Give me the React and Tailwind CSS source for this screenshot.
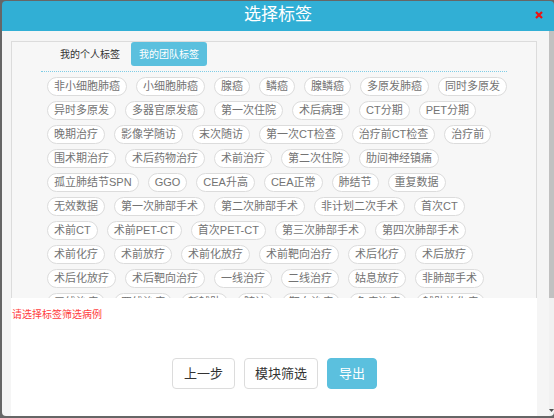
import React from "react";

const tagRows = [
  ["非小细胞肺癌", "小细胞肺癌", "腺癌", "鳞癌", "腺鳞癌", "多原发肺癌", "同时多原发"],
  ["异时多原发", "多器官原发癌", "第一次住院", "术后病理", "CT分期", "PET分期"],
  ["晚期治疗", "影像学随访", "末次随访", "第一次CT检查", "治疗前CT检查", "治疗前"],
  ["围术期治疗", "术后药物治疗", "术前治疗", "第二次住院", "肋间神经镇痛"],
  ["孤立肺结节SPN", "GGO", "CEA升高", "CEA正常", "肺结节", "重复数据"],
  ["无效数据", "第一次肺部手术", "第二次肺部手术", "非计划二次手术", "首次CT"],
  ["术前CT", "术前PET-CT", "首次PET-CT", "第三次肺部手术", "第四次肺部手术"],
  ["术前化疗", "术前放疗", "术前化放疗", "术前靶向治疗", "术后化疗", "术后放疗"],
  ["术后化放疗", "术后靶向治疗", "一线治疗", "二线治疗", "姑息放疗", "非肺部手术"],
  ["三线治疗", "四线治疗", "新辅助", "随访", "靶向治疗", "免疫治疗", "辅助放化疗"],
];

function Tag({ label }) {
  return (
    <span className="h-[19px] px-[6px] border border-[#dcdcdc] rounded-full bg-white text-[11px] leading-[17px] text-[#737373] whitespace-nowrap">
      {label}
    </span>
  );
}

export default function App() {
  return (
    <div className="w-[554px] h-[418px] bg-[#666] pt-[1px] pl-[2px] overflow-hidden font-['Liberation_Sans','Noto_Sans_CJK_SC',sans-serif]">
      <div className="w-[552px] h-[415px] rounded-[4px] overflow-hidden flex flex-col">
        {/* header */}
        <div className="relative h-[30px] bg-[#31afd5] flex items-center justify-center shrink-0">
          <span className="text-white text-[17px] leading-[20px] -mt-[2px]">选择标签</span>
          <svg className="absolute right-[11px] top-[10px]" width="8" height="8" viewBox="0 0 8 8">
            <path d="M1 1L7 7M7 1L1 7" stroke="#ee1111" strokeWidth="2.2" />
          </svg>
        </div>

        {/* body */}
        <div className="flex-1 flex min-h-0">
          <div className="flex-1 bg-[#f5f5f5] pl-[9px] pr-[12px] pt-[10px] flex flex-col">
            <div className="h-[257px] shrink-0 border-t border-x border-[#dcdcdc] bg-[#f7f7f7] overflow-hidden px-[29px]">
              <div className="flex gap-[3px] pl-[11px]">
                <div className="w-[76px] h-[24px] flex items-center justify-center text-[10px] text-[#333] rounded-[3px]">
                  我的个人标签
                </div>
                <div className="w-[76px] h-[24px] flex items-center justify-center text-[10px] text-white bg-[#5bc0de] rounded-[3px]">
                  我的团队标签
                </div>
              </div>
              <div className="mt-[5px] border-t border-dotted border-[#7fcde6]" />
              <div className="mt-[5px] pl-[6px] flex flex-col gap-[5px]">
                {tagRows.map((row, i) => (
                  <div key={i} className="flex gap-[9px]">
                    {row.map((t) => (
                      <Tag key={t} label={t} />
                    ))}
                  </div>
                ))}
              </div>
            </div>

            <div className="flex-1 bg-white pt-[11px] pl-[1px]">
              <p className="text-[10px] leading-[12px] text-[#ff4040]">请选择标签筛选病例</p>
              <div className="mt-[37px] flex justify-center gap-[9px]">
                <button className="h-[31px] px-[11px] border border-[#dcdcdc] rounded-[4px] bg-white text-[13px] text-[#333]">
                  上一步
                </button>
                <button className="h-[31px] px-[10px] border border-[#dcdcdc] rounded-[4px] bg-white text-[13px] text-[#333]">
                  模块筛选
                </button>
                <button className="h-[31px] px-[11px] border border-[#5bc0de] rounded-[4px] bg-[#5bc0de] text-[13px] text-white">
                  导出
                </button>
              </div>
            </div>
          </div>

          {/* scrollbar */}
          <div className="w-[8px] flex flex-col">
            <div className="h-[267px] bg-[#c1c1c1]" />
            <div className="flex-1 bg-[#f1f1f1] flex items-end justify-center pb-[4px]">
              <svg width="5" height="3" viewBox="0 0 5 3">
                <path d="M0 0H5L2.5 3Z" fill="#505050" />
              </svg>
            </div>
          </div>
        </div>
      </div>
    </div>
  );
}
